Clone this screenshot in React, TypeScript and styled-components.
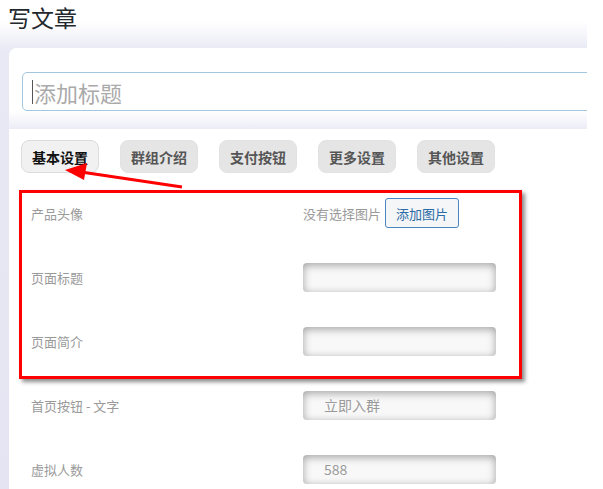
import React from "react";
import styled, { createGlobalStyle } from "styled-components";

const Global = createGlobalStyle`
  html, body { margin: 0; padding: 0; background: #fff; }
  body { font-family: "Noto Sans CJK SC", "Noto Sans", "Liberation Sans", sans-serif; }
  * { box-sizing: border-box; }
`;

const Page = styled.div`
  width: 587px;
  height: 489px;
  overflow: hidden;
  background: linear-gradient(to bottom, #ffffff 0px, #ffffff 22px, #e9e9f5 50px, #e4e4f2 100%);
`;

const Heading = styled.h1`
  margin: 0;
  padding: 1px 0 0 8px;
  height: 48px;
  font-size: 23px;
  line-height: 32px;
  font-weight: 400;
  color: #23282d;
`;

const Card = styled.div`
  margin-left: 9px;
  background: #fff;
  border-top-left-radius: 8px;
  overflow: hidden;
  height: 441px;
`;

const TitleSection = styled.div`
  padding: 24px 0 18px 13px;
  background: linear-gradient(to bottom, #ffffff 0px, #ffffff 63px, #ececf6 81px);
`;

const TitleField = styled.div`
  display: flex;
  align-items: center;
  width: 600px;
  height: 39px;
  border: 1px solid #a3c6e0;
  border-radius: 5px;
  padding-left: 9px;
  background: #fff;
`;

const Caret = styled.span`
  width: 1px;
  height: 24px;
  background: #555;
  margin-right: 1px;
`;

const Placeholder = styled.span`
  font-size: 22px;
  color: #aaaaaa;
  line-height: 1;
`;

const MainSection = styled.div`
  position: relative;
  padding: 11px 0 0 12px;
`;

const Tabs = styled.div`
  display: flex;
  gap: 21px;
`;

const Tab = styled.div<{ $active?: boolean }>`
  width: 78px;
  height: 33px;
  display: flex;
  align-items: center;
  justify-content: center;
  border-radius: 8px;
  font-size: 14px;
  font-weight: 700;
  color: ${(p) => (p.$active ? "#111" : "#555")};
  background: ${(p) => (p.$active ? "#f1f1f1" : "#e5e5e5")};
  border: 1px solid ${(p) => (p.$active ? "#dcdcdc" : "#e2e2e2")};
`;

const Form = styled.div`
  position: relative;
  margin-top: 8px;
  padding-left: 10px;
`;

const Row = styled.div`
  display: grid;
  grid-template-columns: 272px 1fr;
  align-items: center;
  height: 64px;
`;

const Label = styled.div`
  font-size: 13px;
  color: #9a9a9a;
`;

const ImageCell = styled.div`
  display: flex;
  align-items: center;
  gap: 4px;
`;

const Hint = styled.span`
  font-size: 13px;
  color: #9a9a9a;
`;

const AddButton = styled.button`
  height: 30px;
  padding: 0 10px;
  border: 1px solid #4a86bf;
  border-radius: 3px;
  background: #f4f6f7;
  color: #2c6aa6;
  font-family: inherit;
  font-size: 13px;
`;

const Field = styled.div`
  width: 193px;
  height: 29px;
  border-radius: 4px;
  background: #f8f8f8;
  box-shadow: inset 0 2px 8px rgba(0, 0, 0, 0.36);
  display: flex;
  align-items: center;
  padding-left: 21px;
  font-size: 14px;
  color: #9a9a9a;
`;

const Highlight = styled.div`
  position: absolute;
  left: -2px;
  top: 9px;
  width: 503px;
  height: 189px;
  border: 3px solid #ff0000;
  box-shadow: 3px 3px 4px rgba(0, 0, 0, 0.45);
  pointer-events: none;
`;

const Arrow = styled.svg`
  position: absolute;
  left: 0;
  top: 0;
  overflow: visible;
  pointer-events: none;
`;

const tabs = ["基本设置", "群组介绍", "支付按钮", "更多设置", "其他设置"];

export default function App() {
  return (
    <>
      <Global />
      <Page>
        <Heading>写文章</Heading>
        <Card>
          <TitleSection>
            <TitleField>
              <Caret />
              <Placeholder>添加标题</Placeholder>
            </TitleField>
          </TitleSection>
          <MainSection>
            <Tabs>
              {tabs.map((t, i) => (
                <Tab key={t} $active={i === 0}>
                  {t}
                </Tab>
              ))}
            </Tabs>
            <Form>
              <Row>
                <Label>产品头像</Label>
                <ImageCell>
                  <Hint>没有选择图片</Hint>
                  <AddButton>添加图片</AddButton>
                </ImageCell>
              </Row>
              <Row>
                <Label>页面标题</Label>
                <Field />
              </Row>
              <Row>
                <Label>页面简介</Label>
                <Field />
              </Row>
              <Row>
                <Label>首页按钮 - 文字</Label>
                <Field>立即入群</Field>
              </Row>
              <Row>
                <Label>虚拟人数</Label>
                <Field>588</Field>
              </Row>
              <Highlight />
            </Form>
            <Arrow width="1" height="1">
              <line x1="173" y1="58" x2="72" y2="43" stroke="#ff0000" strokeWidth="3" />
              <polygon points="56,41 78,34 75,51" fill="#ff0000" />
            </Arrow>
          </MainSection>
        </Card>
      </Page>
    </>
  );
}
